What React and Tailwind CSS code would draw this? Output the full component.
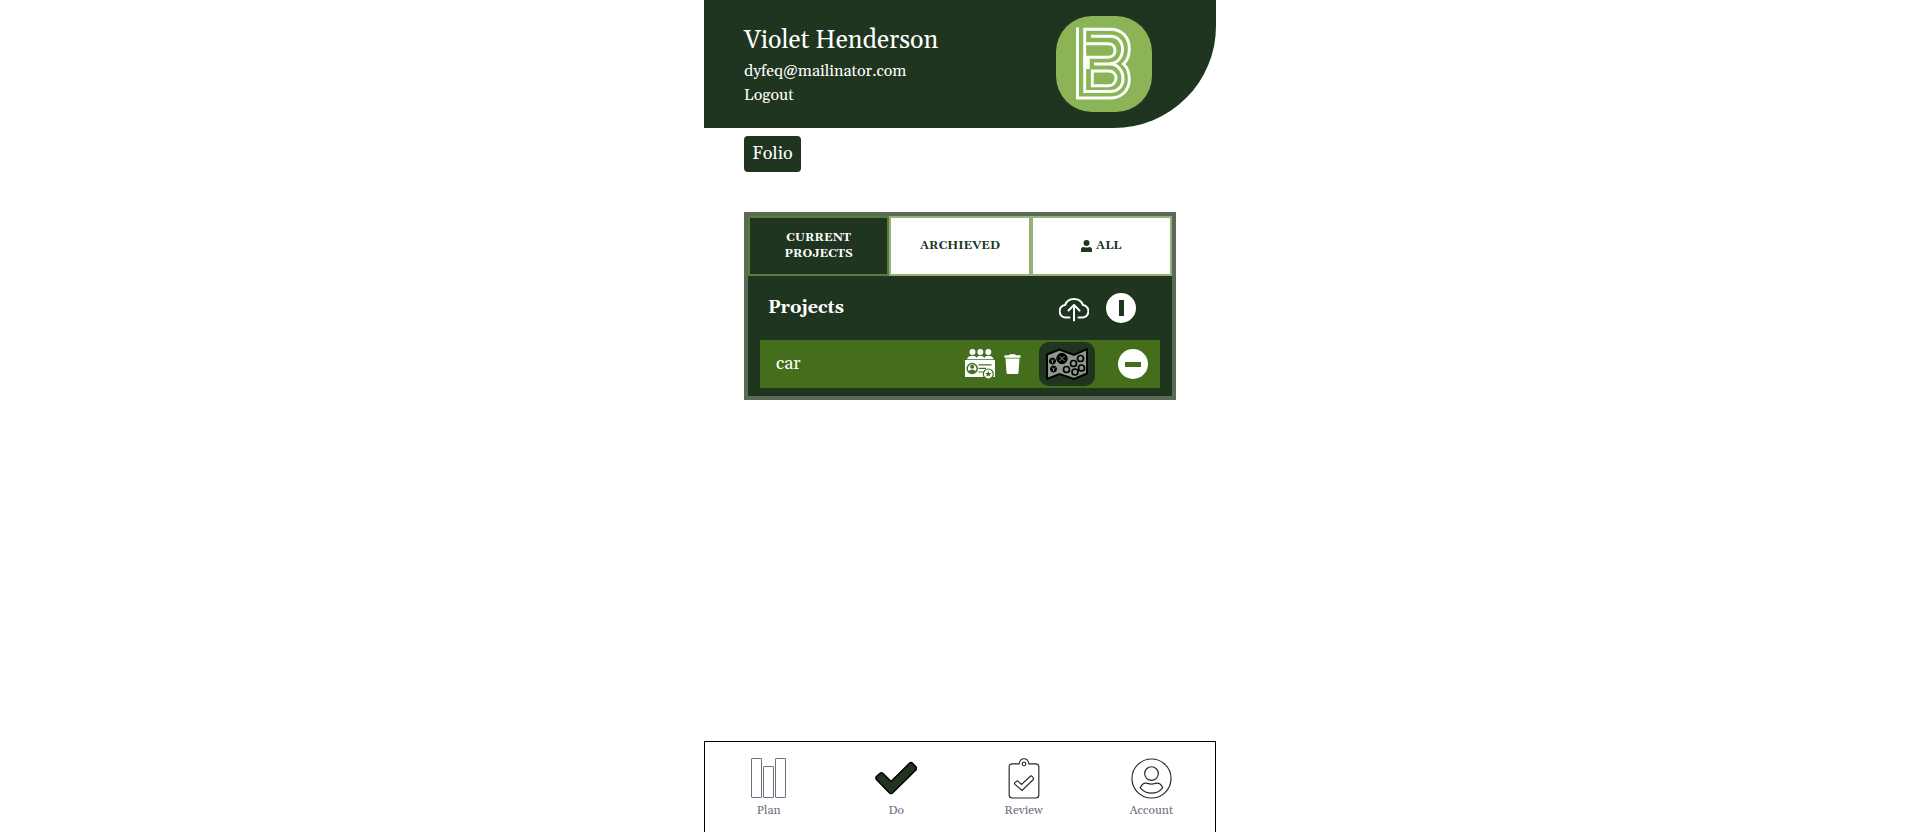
import React from "react";

function Logo() {
  return (
    <svg viewBox="0 0 96 96" className="size-24" role="img" aria-label="B">
      <rect width="96" height="96" rx="36" fill="#8bb456" />
      <g fill="none" stroke="#fff" strokeWidth="2.900">
        <path d="M21.500 11.500V82H54C66 82 73.300 74 73.300 63.500C73.300 56 71 51 67.500 48C71 45 73.300 40 73.300 33C73.300 21 66 13.200 54 13.200H28.700V75.500H54C62 75.500 67 70 67 63C67 55 62 48 54 48H38" />
        <path d="M35 20.300H54C62 20.300 66.500 26 66.500 33C66.500 42 61 47.500 54 47.500" />
        <path d="M29 27.700H52C56 27.700 59 30 59 34.500C59 39 56 41.200 52 41.200H29" />
        <path d="M36.300 55H53C57 55 60 58 60 62C60 66 57 69.700 53 69.700H36.300Z" />
      </g>
      <path d="M27.500 41H33.700V53H27.500Z" fill="#fff" />
    </svg>
  );
}

function CloudUp() {
  return (
    <svg viewBox="0 0 30 26" className="h-[26px] w-[30px]" fill="none" stroke="#fff" strokeWidth="2" strokeLinecap="round" strokeLinejoin="round">
      <path d="M10.500 21.500H7A6 6.300 0 0 1 6.200 8.900A9.200 8.300 0 0 1 23.800 8.900A6 6.300 0 0 1 23 21.500H19.500" />
      <path d="M15 24.500V9.500M9.500 14.500L15 9L20.500 14.500" />
    </svg>
  );
}

function Team() {
  return (
    <svg viewBox="0 0 30 30" className="size-[30px]">
      <g fill="#fff">
        <circle cx="7.500" cy="3" r="3" />
        <circle cx="15.300" cy="3" r="3" />
        <circle cx="23.300" cy="3" r="3" />
        <path d="M2 10.200C2.500 7.500 5 6.800 7.500 6.800S10.800 7.500 11.400 9C12 7.500 13.500 6.800 15.300 6.800S18.500 7.500 19.300 9C20 7.500 21.500 6.800 23.300 6.800S28 7.500 28.500 10.200Z" />
        <path d="M0 11H30V28H0Z" />
      </g>
      <circle cx="7.200" cy="19.500" r="5" fill="#fff" stroke="#456e1c" strokeWidth="1.500" />
      <circle cx="7.200" cy="17.800" r="2" fill="#456e1c" />
      <path d="M3.500 22.500C4 20.200 10.400 20.200 10.900 22.500L7.200 24.500Z" fill="#456e1c" />
      <path d="M13.500 15.800H26.500M13.500 19.300H21M13.500 23H18" stroke="#456e1c" strokeWidth="1.200" />
      <circle cx="23.300" cy="25" r="5" fill="#fff" stroke="#456e1c" strokeWidth="1.200" />
      <path d="M23.300 21.800L24.200 24H26.500L24.700 25.400L25.400 27.700L23.300 26.400L21.200 27.700L21.900 25.400L20.100 24H22.400Z" fill="#456e1c" />
    </svg>
  );
}

function Trash() {
  return (
    <svg viewBox="0 0 17 20" className="h-5 w-[17px]" fill="#fff">
      <path d="M.5 1.300H5L6 .3H11L12 1.300H16.500V3.700H.5Z" />
      <path d="M1.500 4.500H15.500L14.500 18.500Q14.400 20 13 20H4Q2.600 20 2.500 18.500Z" />
    </svg>
  );
}

function MapIcon() {
  return (
    <svg viewBox="0 0 42 32" className="h-8 w-[42px]" stroke="#000" fill="none">
      <path d="M1 6.500L13.500 1.500L28 7L41 1V25.500L28 31L13.500 26L1 31Z" fill="#8e9a8d" strokeWidth="2" />
      <circle cx="16" cy="10.500" r="5.200" fill="#000" />
      <circle cx="6.500" cy="13" r="3" fill="#000" />
      <circle cx="7.500" cy="21" r="3" fill="#000" />
      <g strokeWidth="1.700">
        <circle cx="34.500" cy="10.500" r="3" />
        <circle cx="27.500" cy="15.500" r="3" />
        <circle cx="20.500" cy="21.500" r="3" />
        <circle cx="35.500" cy="20" r="3" />
        <circle cx="29" cy="24" r="3" />
      </g>
      <path d="M13.500 8L18.500 13M18.500 8L13.500 13M5 11.500L6.500 13L8 11.500M6.500 13V15M6 19.500L7.500 21L9 19.500M7.500 21V23" stroke="#8e9a8d" />
    </svg>
  );
}

function PlanIcon() {
  return (
    <svg viewBox="0 0 35 40" className="h-10 w-[35px]" fill="none" stroke="#6b7280">
      <rect x=".5" y=".5" width="10" height="39" rx=".5" />
      <rect x="12.500" y="8.500" width="10" height="31" rx=".5" />
      <rect x="24.500" y=".5" width="10" height="39" rx=".5" />
    </svg>
  );
}

function DoIcon() {
  return (
    <svg viewBox="0 0 42 40" className="h-10 w-[42px]">
      <path d="M1.500 18.500L5 15.300Q6.500 14.300 8 15.500L16 23.500L34.500 5.300Q36 4 37.500 5.300L41 9Q42 10.300 41 11.600L17.500 35Q16 36.200 14.500 35L1.500 21.500Q.3 20 1.500 18.500Z" fill="#20351f" stroke="#000" strokeWidth="1.600" />
    </svg>
  );
}

function ReviewIcon() {
  return (
    <svg viewBox="0 0 32 42" className="h-[41px] w-8" fill="none" stroke="#222b33" strokeWidth="1.200">
      <path d="M11 6H4Q.8 6 .8 9V38Q.8 41 4 41H28Q31.200 41 31.200 38V9Q31.200 6 28 6H21C20.500 2.500 18.500 .8 16 .8S11.500 2.500 11 6Z" />
      <circle cx="16" cy="6" r="1.900" />
      <path d="M6.500 25.500L8.500 23.700Q9.300 23.200 10 23.900L13.500 27L22.500 18.700Q23.500 18 24.500 19L25.500 20.500Q26 21.500 25.300 22.300L14 33.300L6.700 27Q6 26.200 6.500 25.500Z" />
    </svg>
  );
}

function AccountIcon() {
  return (
    <svg viewBox="0 0 42 42" className="size-[41px]" fill="none" stroke="#222b33" strokeWidth="1.200">
      <circle cx="21" cy="21" r="20" />
      <circle cx="21" cy="16" r="7" />
      <path d="M9.500 30.500C11 27 14 25 17 26Q21 27.600 25 26C28 25 31 27 32.500 30.500C29 34.500 25 36 21 36S13 34.500 9.500 30.500Z" />
    </svg>
  );
}

const tabs = [
  { label: "CURRENT PROJECTS", active: true },
  { label: "ARCHIEVED" },
  { label: "ALL", person: true },
];

const links = [
  { label: "Plan", Icon: PlanIcon },
  { label: "Do", Icon: DoIcon },
  { label: "Review", Icon: ReviewIcon },
  { label: "Account", Icon: AccountIcon },
];

export default function App() {
  return (
    <div className="flex min-h-screen justify-center bg-white pl-[13px] font-['Georgia','Gelasio','Liberation_Serif',serif]">
      <div className="flex w-full max-w-lg flex-col">
        <header className="flex h-32 items-center justify-between rounded-br-[102px] bg-[#20351f] pr-16 pl-10 text-white">
          <div className="pt-1">
            <h1 className="text-[25px] leading-8">Violet Henderson</h1>
            <p className="mt-0.5 text-base leading-6">dyfeq@mailinator.com</p>
            <button type="button" className="block text-base leading-6">Logout</button>
          </div>
          <Logo />
        </header>

        <main className="flex-1 px-10 pt-2">
          <button type="button" className="block h-9 rounded bg-[#20351f] px-2 text-lg text-white">Folio</button>

          <section className="mt-10 border-4 border-[#596a57] bg-[#20351f]">
            <div role="tablist" className="grid h-15 grid-cols-3">
              {tabs.map((tab) => (
                <button
                  key={tab.label}
                  type="button"
                  role="tab"
                  aria-selected={!!tab.active}
                  className={
                    tab.active
                      ? "flex items-center justify-center border-2 border-[#587c37] bg-[#20351f] px-6 text-xs leading-4 font-bold text-white"
                      : "flex items-center justify-center gap-1 border-2 border-[#96b077] bg-white text-xs leading-4 font-bold text-[#20351f]"
                  }
                >
                  {tab.person && (
                    <svg viewBox="0 0 11 12" className="h-3 w-[11px]" fill="currentColor">
                      <circle cx="5.500" cy="3" r="3" />
                      <path d="M0 12V9.500Q0 7 2.500 7Q5.500 8 8.500 7Q11 7 11 9.500V12Z" />
                    </svg>
                  )}
                  {tab.label}
                </button>
              ))}
            </div>

            <div className="flex h-16 items-center justify-between pr-9 pl-5 text-white">
              <h2 className="text-lg font-bold">Projects</h2>
              <div className="flex items-center gap-[17px]">
                <button type="button" aria-label="Upload" className="pt-0.5"><CloudUp /></button>
                <button type="button" aria-label="Collapse projects" className="flex size-[30px] items-center justify-center rounded-full bg-white">
                  <span className="h-4 w-[5px] bg-[#20351f]" />
                </button>
              </div>
            </div>

            <div className="mx-3 mb-2 flex h-12 items-center bg-[#456e1c] pr-3 pl-4 text-white">
              <span className="flex-1 text-lg">car</span>
              <button type="button" aria-label="Team"><Team /></button>
              <button type="button" aria-label="Delete" className="ml-[9px]"><Trash /></button>
              <button type="button" aria-label="Map" className="ml-[18px] flex h-11 w-14 items-center justify-center rounded-[10px] bg-[#20351f]">
                <MapIcon />
              </button>
              <button type="button" aria-label="Remove" className="ml-[23px] flex size-[30px] items-center justify-center rounded-full bg-white">
                <span className="h-[5px] w-4 bg-[#456e1c]" />
              </button>
            </div>
          </section>
        </main>

        <nav className="grid h-[91px] grid-cols-4 border border-b-0 border-black pt-4">
          {links.map(({ label, Icon }) => (
            <a key={label} href={"#" + label.toLowerCase()} className="flex flex-col items-center text-xs leading-4 text-gray-500">
              <span className="flex h-[45px] items-start"><Icon /></span>
              {label}
            </a>
          ))}
        </nav>
      </div>
    </div>
  );
}
